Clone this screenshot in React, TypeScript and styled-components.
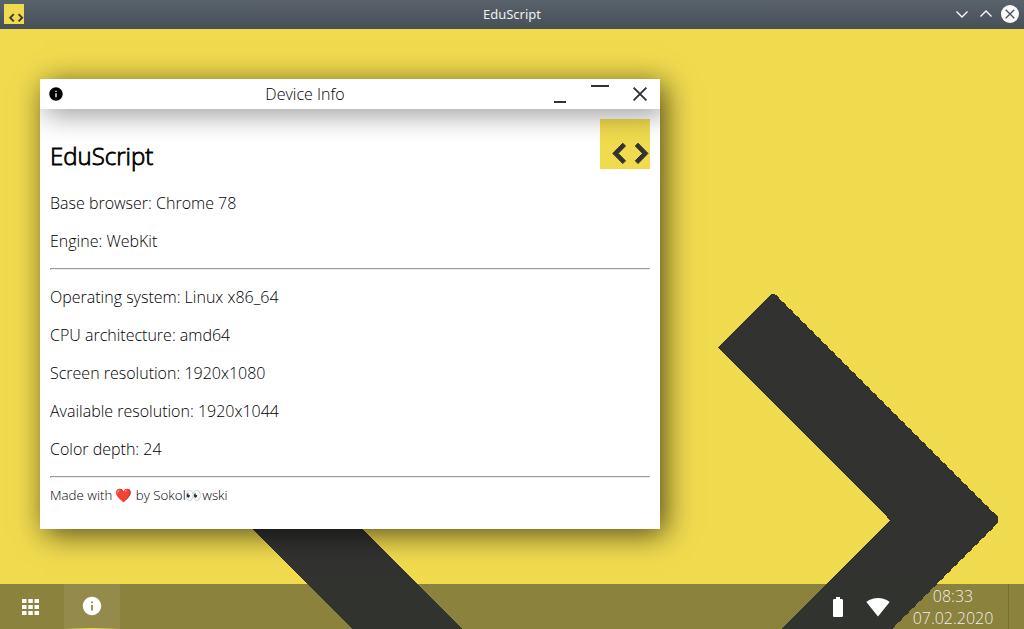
import React from 'react';
import styled, { createGlobalStyle } from 'styled-components';

const YELLOW = '#f0db4f';
const DARK = '#323330';

const GlobalStyle = createGlobalStyle`
  * { box-sizing: border-box; }
  body {
    margin: 0;
    overflow: hidden;
    font-family: "Open Sans", "Noto Color Emoji", sans-serif;
    font-weight: 300;
    font-size: 16px;
    line-height: 22px;
    color: #000;
  }
`;

const Frame = styled.div`
  display: flex;
  flex-direction: column;
  width: 1024px;
  height: 629px;
  background: ${YELLOW};
`;

const SystemBar = styled.header`
  display: grid;
  grid-template-columns: 76px 1fr 76px;
  align-items: center;
  height: 29px;
  padding: 0 4px 1px;
  background: linear-gradient(#59636b, #474f57);
`;

const SystemTitle = styled.div`
  text-align: center;
  font: 400 13px/18px "Noto Sans", sans-serif;
  color: #eff0f1;
`;

const SystemButtons = styled.div`
  display: flex;
  justify-content: flex-end;
  gap: 4px;
`;

const Desktop = styled.main`
  position: relative;
  display: flex;
  flex-direction: column;
  justify-content: space-between;
  flex: 1;
  overflow: hidden;
`;

const Wallpaper = styled.svg`
  position: absolute;
  inset: 0;
  display: block;
`;

const Window = styled.section`
  position: absolute;
  left: 40px;
  top: 50px;
  width: 620px;
  height: 450px;
  display: flex;
  flex-direction: column;
  background: #fff;
  box-shadow: 5px 5px 28px rgba(0, 0, 0, 0.66);
`;

const TitleBar = styled.div`
  position: relative;
  z-index: 1;
  display: flex;
  align-items: center;
  height: 30px;
  flex: none;
`;

const Clip = styled.div`
  position: relative;
  flex: 1;
  overflow: hidden;
`;

const TitleShade = styled.div`
  position: absolute;
  left: 0;
  right: 0;
  top: -30px;
  height: 30px;
  box-shadow: 5px 5px 28px rgba(0, 0, 0, 0.42);
`;

const TitleIcon = styled.div`
  display: flex;
  justify-content: center;
  width: 31px;
`;

const TitleText = styled.div`
  flex: 1;
  padding-right: 1px;
  text-align: center;
`;

const WindowButton = styled.div`
  display: flex;
  justify-content: center;
  width: 40px;
  height: 30px;
`;

const Content = styled.div`
  padding: 10px;
`;

const ContentLogo = styled.div`
  float: right;
  height: 50px;
`;

const Heading = styled.h2`
  margin: 19.92px 0 20px;
  font-size: 24px;
  line-height: 33px;
  font-weight: 300;
  -webkit-text-stroke: 0.8px #000;
`;

const Line = styled.p`
  margin: 16px 0;
`;

const Rule = styled.hr`
  margin: 8px 0;
`;

const Credit = styled.small`
  display: block;
  font-size: 13.333px;
  line-height: 18px;
`;

const Taskbar = styled.footer`
  position: relative;
  display: flex;
  height: 45px;
  margin-top: auto;
  color: #fff;
  background: rgba(50, 51, 48, 0.53);
`;

const TaskButton = styled.div<{ $active?: boolean; $width: number }>`
  display: flex;
  align-items: center;
  justify-content: center;
  width: ${(p) => p.$width}px;
  ${(p) =>
    p.$active &&
    `
    margin-left: 3px;
    padding-bottom: 1px;
    background: linear-gradient(90deg, rgba(240,219,79,0), ${YELLOW} 50%, rgba(240,219,79,0)) bottom / 100% 1px no-repeat,
      rgba(255,255,255,0.07);
  `}
`;

const Tray = styled.div`
  display: flex;
  align-items: center;
  margin-left: auto;
`;

const TrayIcon = styled.div`
  display: flex;
  justify-content: center;
  width: 40px;
`;

const Clock = styled.div`
  width: 110px;
  padding-top: 1px;
  text-align: center;
  color: rgba(255, 255, 255, 0.9);
`;

const ShowDesktop = styled.div`
  width: 16px;
  height: 45px;
  border-left: 1px solid rgba(0, 0, 0, 0.14);
`;

const Svg = styled.svg`
  display: block;
  flex: none;
`;

const Logo = ({ size }: { size: number }) => (
  <Svg width={size} height={size} viewBox="0 0 50 50">
    <rect width="50" height="50" fill={YELLOW} />
    <g fill={DARK} stroke={DARK} strokeLinejoin="round" strokeWidth="1">
      <path d="M22.8 24.2 12.8 34.4 22.8 44.6 25.5 41.8 18.2 34.4 25.5 27Z" />
      <path d="M38 24.2 48 34.4 38 44.6 35.3 41.8 42.6 34.4 35.3 27Z" />
    </g>
  </Svg>
);

const InfoIcon = ({ size }: { size: number }) => (
  <Svg width={size} height={size} viewBox="0 0 24 24" fill="currentColor">
    <path d="M12 2C6.48 2 2 6.48 2 12s4.48 10 10 10 10-4.48 10-10S17.52 2 12 2zm1 15h-2v-6h2v6zm0-8h-2V7h2v2z" />
  </Svg>
);

/* Outer chevron edges step unevenly, like an upscaled bitmap. */
const roughEdge = () => {
  const points: string[] = [];
  for (let i = 0; i < 224; i += 7) {
    points.push(`${774 + i},${265 + i}`, `${778 + i},${267 + i}`);
  }
  points.push('998,488', '998,493');
  for (let i = 4; i <= 116; i += 7) {
    points.push(`${998 - i},${493 + i}`, `${996 - i},${497 + i}`);
  }
  return points.join(' ');
};

const lines = [
  'Operating system: Linux x86_64',
  'CPU architecture: amd64',
  'Screen resolution: 1920x1080',
  'Available resolution: 1920x1044',
  'Color depth: 24',
];

export default function App() {
  return (
    <Frame>
      <GlobalStyle />
      <SystemBar>
        <Logo size={20} />
        <SystemTitle>EduScript</SystemTitle>
        <SystemButtons>
          <Svg width="20" height="20" fill="none" stroke="#fff" strokeWidth="1.3">
            <path d="M4.5 7.5 10 13 15.5 7.5" />
          </Svg>
          <Svg width="20" height="20" fill="none" stroke="#fff" strokeWidth="1.3">
            <path d="M4.5 12.5 10 7 15.5 12.5" />
          </Svg>
          <Svg width="20" height="20" fill="none" stroke="#475057" strokeWidth="1.3">
            <circle cx="10" cy="10" r="9" fill="#fcfcfc" stroke="none" />
            <path d="M5.7 5.7 14.3 14.3M14.3 5.7 5.7 14.3" />
          </Svg>
        </SystemButtons>
      </SystemBar>
      <Desktop>
        <Wallpaper width="1024" height="600" shapeRendering="crispEdges" fill={DARK}>
          <path d="M202 450 402 650H512L312 450Z" />
          <polygon points={`890,491 718,318 771,265 ${roughEdge()} 870,620 761,620`} />
        </Wallpaper>
        <Window>
          <TitleBar>
            <TitleIcon>
              <InfoIcon size={16} />
            </TitleIcon>
            <TitleText>Device Info</TitleText>
            <WindowButton>
              <Svg width="40" height="30" fill="#323232">
                <rect x="14" y="22" width="12" height="2" />
              </Svg>
            </WindowButton>
            <WindowButton>
              <Svg width="40" height="30" fill="#323232">
                <rect x="11" y="6" width="18" height="2" />
              </Svg>
            </WindowButton>
            <WindowButton>
              <Svg width="40" height="30" stroke="#323232" strokeWidth="1.9">
                <path d="M13.6 8.6 26.4 21.4M26.4 8.6 13.6 21.4" />
              </Svg>
            </WindowButton>
          </TitleBar>
          <Clip>
            <Content>
              <ContentLogo>
                <Logo size={50} />
              </ContentLogo>
              <Heading>EduScript</Heading>
              <Line>Base browser: Chrome 78</Line>
              <Line>Engine: WebKit</Line>
              <Rule />
              {lines.map((line) => (
                <Line key={line}>{line}</Line>
              ))}
              <Rule />
              <Credit>Made with ❤️ by Sokol👀wski</Credit>
            </Content>
            <TitleShade />
          </Clip>
        </Window>
        <Taskbar>
          <TaskButton $width={61}>
            <Svg width="25" height="24" viewBox="0 0 25 24" fill="#fff">
              {[4, 10, 16].map((y) =>
                [4, 10.3, 16.5].map((x) => <rect key={`${x}-${y}`} x={x} y={y} width="4.5" height="4" />)
              )}
            </Svg>
          </TaskButton>
          <TaskButton $width={56} $active>
            <InfoIcon size={22} />
          </TaskButton>
          <Tray>
            <TrayIcon>
              <Svg width="24" height="24" fill="#fff">
                <path d="M15.67 4H14V2h-4v2H8.33C7.6 4 7 4.6 7 5.33v15.33C7 21.4 7.6 22 8.33 22h7.33c.74 0 1.34-.6 1.34-1.33V5.33C17 4.6 16.4 4 15.67 4z" />
              </Svg>
            </TrayIcon>
            <TrayIcon>
              <Svg width="24" height="24" fill="#fff">
                <path d="M12.01 21.49 23.64 7c-.45-.34-4.93-4-11.64-4C5.28 3 .81 6.66.36 7l11.63 14.49.01.01.01-.01z" />
              </Svg>
            </TrayIcon>
            <Clock>
              <div>08:33</div>
              <div>07.02.2020</div>
            </Clock>
            <ShowDesktop />
          </Tray>
        </Taskbar>
      </Desktop>
    </Frame>
  );
}
